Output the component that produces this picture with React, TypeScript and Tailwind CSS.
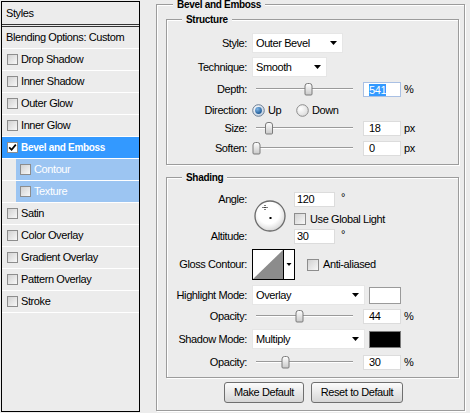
import React from "react";

function Checkbox({ checked, big, white }: { checked?: boolean; big?: boolean; white?: boolean }) {
  const size = big ? "w-[12px] h-[12px]" : "w-[11px] h-[11px]";
  const bg = white ? "bg-white" : "bg-linear-to-br from-[#d2d2d2] to-[#f8f8f8]";
  return (
    <span className={`${size} ${bg} shrink-0 border border-[#8d8d8d] flex items-center justify-center`}>
      {checked && (
        <svg width="9" height="9" viewBox="0 0 9 9">
          <path d="M1.2 4.3 L3.6 6.8 L7.8 1.6" stroke="#000" strokeWidth="1.7" fill="none" />
        </svg>
      )}
    </span>
  );
}

function StyleItem({ label }: { label: string }) {
  return (
    <div className="h-[22px] border-b border-white flex items-center pl-[5px] gap-[3px]">
      <Checkbox />
      <span>{label}</span>
    </div>
  );
}

function SubItem({ label }: { label: string }) {
  return (
    <div className="h-[22px] border-b border-white flex pl-[14px]">
      <div className="flex-1 bg-[#9cc5f2] flex items-center pl-[4px] gap-[3px] text-white">
        <Checkbox />
        <span>{label}</span>
      </div>
    </div>
  );
}

function Arrow() {
  return (
    <svg width="7" height="4" viewBox="0 0 7 4" className="shrink-0">
      <polygon points="0,0 7,0 3.5,4" fill="#000" />
    </svg>
  );
}

function Select({ text, className }: { text: string; className: string }) {
  return (
    <div className={`${className} h-[20px] bg-white border border-[#e6e6e6] flex items-center pl-[3px] pr-[5px]`}>
      <span className="flex-1">{text}</span>
      <Arrow />
    </div>
  );
}

function Slider({ pos }: { pos: number }) {
  const c = pos;
  const d = `M${c - 3.5} 4 Q${c - 3.5} 1.5 ${c - 1} 1.5 L${c + 1} 1.5 Q${c + 3.5} 1.5 ${c + 3.5} 4 L${c + 3.5} 12 Q${c + 3.5} 13 ${c + 2.5} 13 L${c - 2.5} 13 Q${c - 3.5} 13 ${c - 3.5} 12 Z`;
  return (
    <svg width="111" height="15" viewBox="0 0 111 15" className="shrink-0">
      <defs>
        <linearGradient id="thumbg" x1="0" y1="0" x2="0" y2="1">
          <stop offset="0" stopColor="#ffffff" />
          <stop offset="1" stopColor="#c9c9c9" />
        </linearGradient>
      </defs>
      <line x1="4" y1="6.5" x2="101" y2="6.5" stroke="#9a9a9a" />
      <line x1="4" y1="7.5" x2="101" y2="7.5" stroke="#ffffff" />
      <path d={d} fill="url(#thumbg)" stroke="#7a7a7a" />
    </svg>
  );
}

function Field({ children, className }: { children: React.ReactNode; className: string }) {
  return (
    <div className={`${className} h-[15px] bg-white border border-[#dcdcdc] flex items-center`}>
      {children}
    </div>
  );
}

function Label({ children }: { children: React.ReactNode }) {
  return <span className="w-[80px] shrink-0 text-right">{children}</span>;
}

function SliderRow({ label, pos, value, unit, className }: { label: string; pos: number; value: string; unit: string; className: string }) {
  return (
    <div className={`${className} h-[15px] flex items-center`}>
      <Label>{label}</Label>
      <div className="ml-[5px] flex items-center">
        <Slider pos={pos} />
        <Field className="w-[38px] pl-[5px]">{value}</Field>
        <span className="ml-[3px]">{unit}</span>
      </div>
    </div>
  );
}

function Radio({ checked }: { checked?: boolean }) {
  return (
    <svg width="13" height="13" viewBox="0 0 13 13" className="shrink-0">
      <defs>
        <radialGradient id={checked ? "rgon" : "rgoff"} cx="0.35" cy="0.35" r="0.8">
          <stop offset="0" stopColor="#ffffff" />
          <stop offset="1" stopColor={checked ? "#b9c9dc" : "#d6d6d6"} />
        </radialGradient>
        <radialGradient id="rdot" cx="0.35" cy="0.3" r="0.8">
          <stop offset="0" stopColor="#7fb6e8" />
          <stop offset="1" stopColor="#14508c" />
        </radialGradient>
      </defs>
      <circle cx="6.5" cy="6.5" r="5.8" fill={checked ? "url(#rgon)" : "url(#rgoff)"} stroke={checked ? "#6d7f94" : "#8c8c8c"} />
      {checked && <circle cx="6.5" cy="6.5" r="3.4" fill="url(#rdot)" />}
    </svg>
  );
}

function Title({ children, className }: { children: React.ReactNode; className: string }) {
  return (
    <div className={`${className} w-fit h-[13px] leading-[13px] px-[4px] bg-[#ececec] font-bold text-[10px] tracking-[-0.3px]`}>
      {children}
    </div>
  );
}

function Button({ children, className }: { children: React.ReactNode; className: string }) {
  return (
    <div className={`${className} h-[21px] rounded-[3px] border border-[#6f6f6f] bg-linear-to-b from-[#fcfcfc] to-[#d6d6d6] flex items-center justify-center`}>
      {children}
    </div>
  );
}

export default function App() {
  const etched = "border border-[#9c9c9c] shadow-[inset_1px_1px_0_#fff,1px_1px_0_#fff]";
  return (
    <div className="w-[470px] h-[413px] bg-[#ececec] flex overflow-hidden text-black text-[11px] tracking-[-0.4px] font-['Liberation_Sans',Arial,sans-serif]">
      {/* Left list */}
      <div className="ml-[1px] mt-[1px] w-[139px] h-[411px] border border-black flex flex-col shrink-0">
        <div className="h-[22px] flex items-center pl-[4px]">Styles</div>
        <div className="h-[3px] border-y border-[#333]" />
        <div className="h-[22px] border-b border-white flex items-center pl-[4px]">Blending Options: Custom</div>
        <StyleItem label="Drop Shadow" />
        <StyleItem label="Inner Shadow" />
        <StyleItem label="Outer Glow" />
        <StyleItem label="Inner Glow" />
        <div className="h-[22px] border-b border-white bg-[#3399ff] flex items-center pl-[5px] gap-[3px] text-white font-bold text-[10px] tracking-[-0.3px]">
          <Checkbox checked white />
          <span>Bevel and Emboss</span>
        </div>
        <SubItem label="Contour" />
        <SubItem label="Texture" />
        <StyleItem label="Satin" />
        <StyleItem label="Color Overlay" />
        <StyleItem label="Gradient Overlay" />
        <StyleItem label="Pattern Overlay" />
        <StyleItem label="Stroke" />
      </div>

      {/* Right settings */}
      <div className={`ml-[16px] mt-[4px] w-[309px] h-[407px] shrink-0 flex flex-col ${etched}`}>
        <Title className="ml-[16px] -mt-[7px]">Bevel and Emboss</Title>

        {/* Structure */}
        <div className={`ml-[9px] mt-[8px] w-[293px] h-[146px] shrink-0 flex flex-col ${etched}`}>
          <Title className="ml-[15px] -mt-[7px]">Structure</Title>
          <div className="mt-[7px] h-[20px] flex items-center">
            <Label>Style:</Label>
            <Select text="Outer Bevel" className="ml-[5px] w-[91px]" />
          </div>
          <div className="mt-[4px] h-[20px] flex items-center">
            <Label>Technique:</Label>
            <Select text="Smooth" className="ml-[5px] w-[75px]" />
          </div>
          <div className="mt-[5px] h-[15px] flex items-center">
            <Label>Depth:</Label>
            <div className="ml-[5px] flex items-center">
              <Slider pos={56.5} />
              <div className="w-[38px] h-[15px] bg-white border border-[#a9c0e4] flex items-center pl-[5px]">
                <span className="bg-[#3399ff] text-white leading-[12px]">541</span>
              </div>
              <span className="ml-[3px]">%</span>
            </div>
          </div>
          <div className="mt-[6px] h-[15px] flex items-center">
            <Label>Direction:</Label>
            <div className="ml-[5px] w-[44px] flex items-center gap-[3px]">
              <Radio checked />
              <span>Up</span>
            </div>
            <div className="flex items-center gap-[3px]">
              <Radio />
              <span>Down</span>
            </div>
          </div>
          <SliderRow className="mt-[3px]" label="Size:" pos={17} value="18" unit="px" />
          <SliderRow className="mt-[5px]" label="Soften:" pos={4.5} value="0" unit="px" />
        </div>

        {/* Shading */}
        <div className={`ml-[9px] mt-[12px] w-[293px] h-[201px] shrink-0 flex flex-col ${etched}`}>
          <Title className="ml-[15px] -mt-[7px]">Shading</Title>
          <div className="mt-[8px] flex">
            <div className="w-[80px] shrink-0 flex flex-col text-right">
              <div className="h-[15px] leading-[15px]">Angle:</div>
              <div className="mt-[22px] h-[15px] leading-[15px]">Altitude:</div>
            </div>
            <svg width="34" height="34" viewBox="0 0 34 34" className="ml-[6px] mt-[7px] shrink-0">
              <defs>
                <radialGradient id="dialg" cx="0.45" cy="0.4" r="0.6">
                  <stop offset="0.6" stopColor="#ffffff" />
                  <stop offset="1" stopColor="#d8d8d8" />
                </radialGradient>
              </defs>
              <circle cx="17" cy="17.5" r="15.5" fill="#c8c8c8" opacity="0.5" />
              <circle cx="17" cy="17" r="15" fill="url(#dialg)" stroke="#6b6b6b" strokeWidth="1.3" />
              <line x1="9.5" y1="8.5" x2="14.5" y2="8.5" stroke="#000" strokeDasharray="1 1" />
              <line x1="12" y1="6" x2="12" y2="11" stroke="#000" strokeDasharray="1 1" />
              <rect x="16.5" y="18" width="2" height="2" fill="#000" />
            </svg>
            <div className="ml-[7px] flex flex-col">
              <div className="h-[15px] flex items-center">
                <Field className="w-[41px] pl-[2px]">120</Field>
                <span className="ml-[6px] self-start leading-[10px]">°</span>
              </div>
              <div className="mt-[6px] h-[12px] flex items-center gap-[4px]">
                <Checkbox big />
                <span>Use Global Light</span>
              </div>
              <div className="mt-[4px] h-[15px] flex items-center">
                <Field className="w-[41px] pl-[2px]">30</Field>
                <span className="ml-[6px] self-start leading-[10px]">°</span>
              </div>
            </div>
          </div>
          <div className="mt-[5px] h-[31px] flex items-center">
            <Label>Gloss Contour:</Label>
            <svg width="43" height="31" viewBox="0 0 43 31" className="ml-[5px] shrink-0">
              <rect x="0.5" y="0.5" width="42" height="30" fill="#fff" stroke="#000" />
              <polygon points="1,30 31,1 31,30" fill="#8c8c8c" />
              <line x1="31.5" y1="0.5" x2="31.5" y2="30.5" stroke="#000" />
              <polygon points="34.5,14 39.5,14 37,17" fill="#000" />
            </svg>
            <div className="ml-[12px] flex items-center gap-[4px]">
              <Checkbox big />
              <span>Anti-aliased</span>
            </div>
          </div>
          <div className="mt-[5px] h-[20px] flex items-center">
            <Label>Highlight Mode:</Label>
            <Select text="Overlay" className="ml-[5px] w-[113px]" />
            <div className="ml-[4px] w-[32px] h-[17px] bg-white border border-[#9a9a9a]" />
          </div>
          <SliderRow className="mt-[4px]" label="Opacity:" pos={47.5} value="44" unit="%" />
          <div className="mt-[5px] h-[20px] flex items-center">
            <Label>Shadow Mode:</Label>
            <Select text="Multiply" className="ml-[5px] w-[113px]" />
            <div className="ml-[4px] w-[32px] h-[17px] bg-black border border-[#7a7a7a]" />
          </div>
          <SliderRow className="mt-[6px]" label="Opacity:" pos={33.5} value="30" unit="%" />
        </div>

        <div className="mt-[4px] flex">
          <Button className="ml-[67px] w-[80px]">Make Default</Button>
          <Button className="ml-[7px] w-[92px]">Reset to Default</Button>
        </div>
      </div>
    </div>
  );
}
